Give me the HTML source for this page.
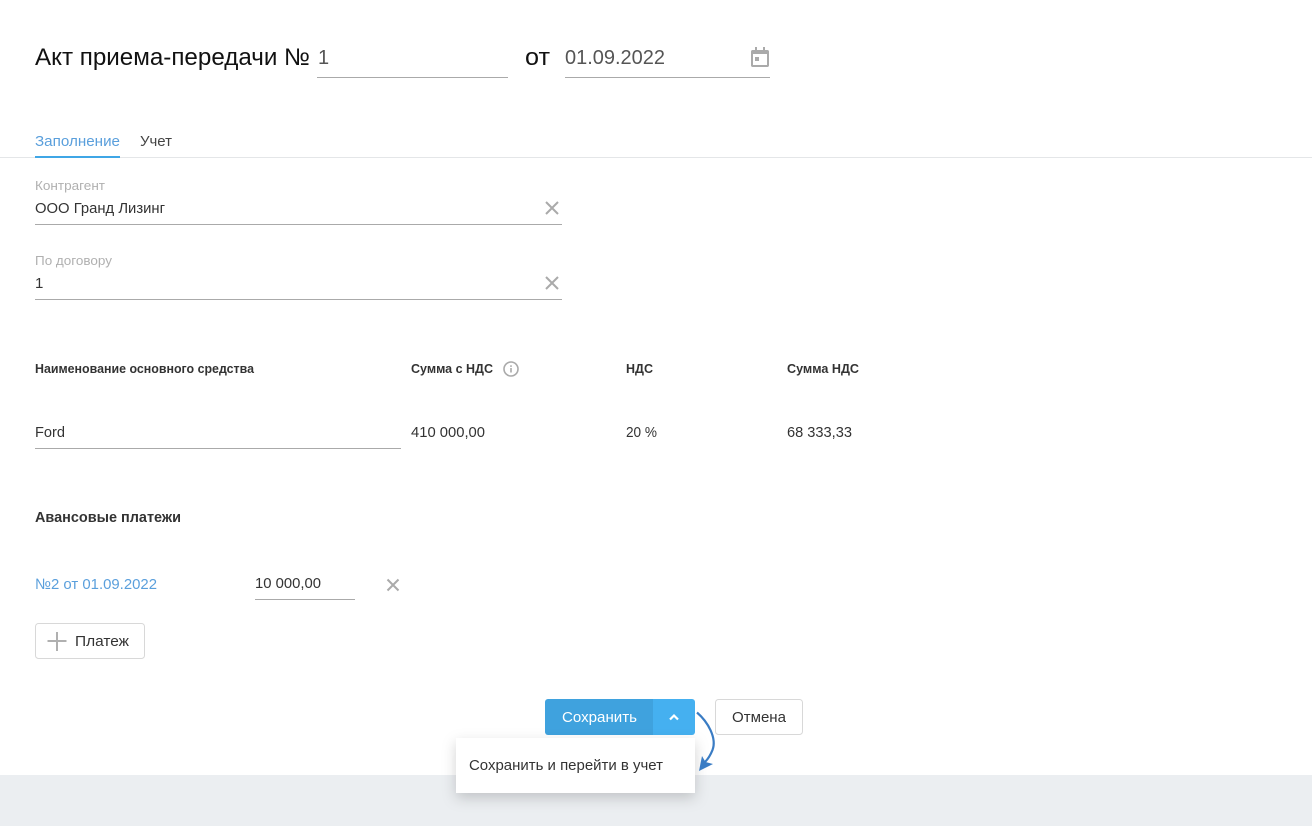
<!DOCTYPE html>
<html lang="ru">
<head>
<meta charset="utf-8">
<title>Акт приема-передачи</title>
<style>
html,body{margin:0;padding:0;background:#fff;width:1312px;height:826px;overflow:hidden}
svg{display:block}
text{font-family:"Liberation Sans",sans-serif;fill:#333;white-space:pre}
.lab{font-size:13px;fill:#b0b0b0}
.val{font-size:15px;fill:#333}
.th{font-size:12.5px;font-weight:700;fill:#333}
.x{stroke:#aaa;stroke-width:2;fill:none}
</style>
</head>
<body>
<svg width="1312" height="826" viewBox="0 0 1312 826" xmlns="http://www.w3.org/2000/svg">
<defs>
<filter id="sh" x="-20%" y="-30%" width="140%" height="170%">
<feDropShadow dx="0" dy="5" stdDeviation="7" flood-color="#000" flood-opacity=".18"/>
</filter>
</defs>
<rect width="1312" height="826" fill="#fff"/>
<rect x="0" y="775" width="1312" height="51" fill="#ebeef1"/>

<!-- header -->
<text x="35" y="65" font-size="24" textLength="275" lengthAdjust="spacingAndGlyphs" style="fill:#111">Акт приема-передачи №</text>
<text x="318" y="64" font-size="20" style="fill:#555">1</text>
<rect x="317" y="77" width="191" height="1" fill="#aaa"/>
<text x="525" y="65" font-size="24" textLength="25" lengthAdjust="spacingAndGlyphs" style="fill:#111">от</text>
<text x="565" y="64" font-size="20" textLength="100" lengthAdjust="spacingAndGlyphs" style="fill:#555">01.09.2022</text>
<rect x="565" y="77" width="205" height="1" fill="#aaa"/>
<path fill="#aaa" fill-rule="evenodd" d="M755 47h2v3h6v-3h2v3h2.500c.8 0 1.500.7 1.500 1.500v14c0 .8-.7 1.500-1.500 1.500h-15c-.8 0-1.500-.7-1.500-1.500v-14c0-.8.7-1.500 1.500-1.500H755zM753 54v11h14V54zM755 57h4v4h-4z"/>

<!-- tabs -->
<text x="35" y="146" font-size="15" textLength="85" lengthAdjust="spacingAndGlyphs" style="fill:#5a9fdc">Заполнение</text>
<text x="140" y="146" font-size="15" textLength="32" lengthAdjust="spacingAndGlyphs" style="fill:#444">Учет</text>
<rect x="0" y="157" width="1312" height="1" fill="#e4e6e8"/>
<rect x="35" y="156" width="85" height="2" fill="#3fa6e6"/>

<!-- fields -->
<text class="lab" x="35" y="190" textLength="70" lengthAdjust="spacingAndGlyphs">Контрагент</text>
<text class="val" x="35" y="213" textLength="130" lengthAdjust="spacingAndGlyphs">ООО Гранд Лизинг</text>
<path class="x" d="M546 202l12 12M558 202l-12 12"/>
<rect x="35" y="224" width="527" height="1" fill="#aaa"/>

<text class="lab" x="35" y="265" textLength="77" lengthAdjust="spacingAndGlyphs">По договору</text>
<text class="val" x="35" y="288">1</text>
<path class="x" d="M546 277l12 12M558 277l-12 12"/>
<rect x="35" y="299" width="527" height="1" fill="#aaa"/>

<!-- table -->
<text class="th" x="35" y="373" textLength="219" lengthAdjust="spacingAndGlyphs">Наименование основного средства</text>
<text class="th" x="411" y="373" textLength="82" lengthAdjust="spacingAndGlyphs">Сумма с НДС</text>
<circle cx="511" cy="369" r="7" fill="none" stroke="#aaa" stroke-width="1.600"/>
<rect x="510.200" y="368" width="1.600" height="4.500" fill="#aaa"/>
<rect x="510.200" y="365.300" width="1.600" height="1.600" fill="#aaa"/>
<text class="th" x="626" y="373" textLength="27" lengthAdjust="spacingAndGlyphs">НДС</text>
<text class="th" x="787" y="373" textLength="72" lengthAdjust="spacingAndGlyphs">Сумма НДС</text>

<text class="val" x="35" y="437" textLength="30" lengthAdjust="spacingAndGlyphs">Ford</text>
<rect x="35" y="448" width="366" height="1" fill="#aaa"/>
<text class="val" x="411" y="437" textLength="74" lengthAdjust="spacingAndGlyphs">410 000,00</text>
<text class="val" x="626" y="437" textLength="31" lengthAdjust="spacingAndGlyphs">20 %</text>
<text class="val" x="787" y="437" textLength="65" lengthAdjust="spacingAndGlyphs">68 333,33</text>

<!-- advances -->
<text x="35" y="522" font-size="14.500" font-weight="700" textLength="146" lengthAdjust="spacingAndGlyphs" style="fill:#333">Авансовые платежи</text>
<text class="val" x="35" y="589" textLength="122" lengthAdjust="spacingAndGlyphs" style="fill:#5a9fdc">№2 от 01.09.2022</text>
<text class="val" x="255" y="588" textLength="66" lengthAdjust="spacingAndGlyphs">10 000,00</text>
<rect x="255" y="599" width="100" height="1" fill="#aaa"/>
<path class="x" d="M387.500 579.500l11 11M398.500 579.500l-11 11"/>

<rect x="35.500" y="623.500" width="109" height="35" rx="3" fill="#fff" stroke="#d8d8d8"/>
<path stroke="#b0b0b0" stroke-width="2" fill="none" d="M57 632v19M47.500 641h19"/>
<text class="val" x="75" y="646" textLength="54" lengthAdjust="spacingAndGlyphs">Платеж</text>

<!-- actions -->
<path fill="#3fa2de" d="M548 699h105v36H548a3 3 0 0 1-3-3v-30a3 3 0 0 1 3-3z"/>
<path fill="#45b0f0" d="M653 699h39a3 3 0 0 1 3 3v30a3 3 0 0 1-3 3h-39z"/>
<text class="val" x="562" y="722" textLength="75" lengthAdjust="spacingAndGlyphs" style="fill:#fff">Сохранить</text>
<path d="M670 719.500l4-4 4 4" fill="none" stroke="#fff" stroke-width="2.200"/>
<rect x="715.500" y="699.500" width="87" height="35" rx="3" fill="#fff" stroke="#d8d8d8"/>
<text class="val" x="732" y="722" textLength="54" lengthAdjust="spacingAndGlyphs">Отмена</text>

<!-- dropdown -->
<rect x="456" y="738" width="239" height="55" fill="#fff" filter="url(#sh)"/>
<text class="val" x="469" y="770" textLength="194" lengthAdjust="spacingAndGlyphs">Сохранить и перейти в учет</text>

<!-- arrow -->
<path d="M697 712.500C708 722 717 738 712.500 750C710.500 755 708 759 705 762" fill="none" stroke="#3a7cc4" stroke-width="2.200"/>
<path d="M699 771L702 756L705.500 762L713 764Z" fill="#3a7cc4"/>
</svg>
</body>
</html>
